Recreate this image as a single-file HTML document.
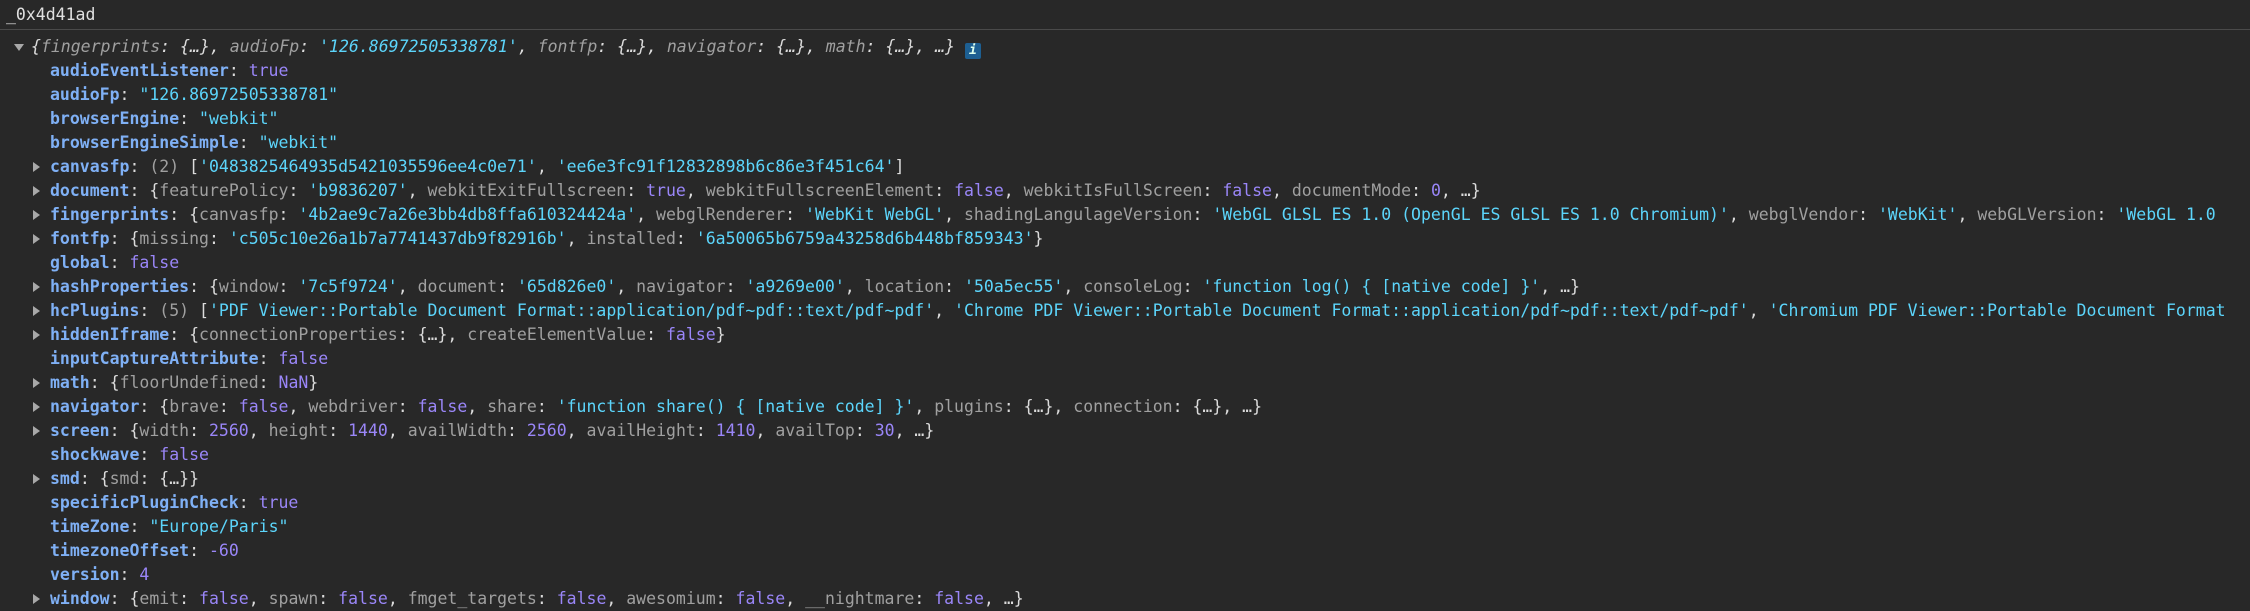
<!DOCTYPE html>
<html><head><meta charset="utf-8"><style>
html,body{margin:0;padding:0;background:#282828;width:2250px;height:610px;overflow:hidden}
body{font-family:"DejaVu Sans Mono","Liberation Mono",monospace;font-size:16.5px;color:#dcdcdc}
.h{position:absolute;left:6px;top:3px;line-height:24px;color:#e0e0e0}
.sep{position:absolute;left:0;top:29px;width:2250px;height:1px;background:#4a4a4a}
.l{position:absolute;left:0;height:24px;line-height:24px;white-space:pre}
.k{color:#7fb0f5;font-weight:bold}
.s{color:#5cd5fb}
.n{color:#9a86f8}
.g{color:#a0a0a0}
.t{display:inline-block;width:0;height:0;border-top:5px solid transparent;border-bottom:5px solid transparent;border-left:7px solid #a8a8a8;position:absolute;left:33px;top:7px}
.d{display:inline-block;width:0;height:0;border-left:5px solid transparent;border-right:5px solid transparent;border-top:7px solid #a8a8a8;position:absolute;left:14px;top:9px}
.i{display:inline-block;width:16px;height:16px;background:#1d5f92;color:#dfe;font-style:italic;font-weight:bold;font-size:13px;line-height:16px;text-align:center;border-radius:2px;vertical-align:-2px}
</style></head><body>
<div class="h">_0x4d41ad</div>
<div class="sep"></div>
<div class="l" style="top:35px;left:0"><span class="d"></span><span style="position:absolute;left:31px;font-style:italic"><span>{</span><span class="g">fingerprints</span>: {…}, <span class="g">audioFp</span>: <span class="s">'126.86972505338781'</span>, <span class="g">fontfp</span>: {…}, <span class="g">navigator</span>: {…}, <span class="g">math</span>: {…}, …} <span class="i">i</span></span></div>

<div style="position:absolute;left:0;top:59px">
<div class="l" style="top:0"><span style="position:absolute;left:50px"><span class="k">audioEventListener</span>: <span class="n">true</span></span></div>
<div class="l" style="top:24px"><span style="position:absolute;left:50px"><span class="k">audioFp</span>: <span class="s">"126.86972505338781"</span></span></div>
<div class="l" style="top:48px"><span style="position:absolute;left:50px"><span class="k">browserEngine</span>: <span class="s">"webkit"</span></span></div>
<div class="l" style="top:72px"><span style="position:absolute;left:50px"><span class="k">browserEngineSimple</span>: <span class="s">"webkit"</span></span></div>
<div class="l" style="top:96px"><span class="t"></span><span style="position:absolute;left:50px"><span class="k">canvasfp</span>: <span class="g">(2)</span> [<span class="s">'0483825464935d5421035596ee4c0e71'</span>, <span class="s">'ee6e3fc91f12832898b6c86e3f451c64'</span>]</span></div>
<div class="l" style="top:120px"><span class="t"></span><span style="position:absolute;left:50px"><span class="k">document</span>: {<span class="g">featurePolicy</span>: <span class="s">'b9836207'</span>, <span class="g">webkitExitFullscreen</span>: <span class="n">true</span>, <span class="g">webkitFullscreenElement</span>: <span class="n">false</span>, <span class="g">webkitIsFullScreen</span>: <span class="n">false</span>, <span class="g">documentMode</span>: <span class="n">0</span>, …}</span></div>
<div class="l" style="top:144px"><span class="t"></span><span style="position:absolute;left:50px"><span class="k">fingerprints</span>: {<span class="g">canvasfp</span>: <span class="s">'4b2ae9c7a26e3bb4db8ffa610324424a'</span>, <span class="g">webglRenderer</span>: <span class="s">'WebKit WebGL'</span>, <span class="g">shadingLangulageVersion</span>: <span class="s">'WebGL GLSL ES 1.0 (OpenGL ES GLSL ES 1.0 Chromium)'</span>, <span class="g">webglVendor</span>: <span class="s">'WebKit'</span>, <span class="g">webGLVersion</span>: <span class="s">'WebGL 1.0</span></span></div>
<div class="l" style="top:168px"><span class="t"></span><span style="position:absolute;left:50px"><span class="k">fontfp</span>: {<span class="g">missing</span>: <span class="s">'c505c10e26a1b7a7741437db9f82916b'</span>, <span class="g">installed</span>: <span class="s">'6a50065b6759a43258d6b448bf859343'</span>}</span></div>
<div class="l" style="top:192px"><span style="position:absolute;left:50px"><span class="k">global</span>: <span class="n">false</span></span></div>
<div class="l" style="top:216px"><span class="t"></span><span style="position:absolute;left:50px"><span class="k">hashProperties</span>: {<span class="g">window</span>: <span class="s">'7c5f9724'</span>, <span class="g">document</span>: <span class="s">'65d826e0'</span>, <span class="g">navigator</span>: <span class="s">'a9269e00'</span>, <span class="g">location</span>: <span class="s">'50a5ec55'</span>, <span class="g">consoleLog</span>: <span class="s">'function log() { [native code] }'</span>, …}</span></div>
<div class="l" style="top:240px"><span class="t"></span><span style="position:absolute;left:50px"><span class="k">hcPlugins</span>: <span class="g">(5)</span> [<span class="s">'PDF Viewer::Portable Document Format::application/pdf~pdf::text/pdf~pdf'</span>, <span class="s">'Chrome PDF Viewer::Portable Document Format::application/pdf~pdf::text/pdf~pdf'</span>, <span class="s">'Chromium PDF Viewer::Portable Document Format</span></span></div>
<div class="l" style="top:264px"><span class="t"></span><span style="position:absolute;left:50px"><span class="k">hiddenIframe</span>: {<span class="g">connectionProperties</span>: {…}, <span class="g">createElementValue</span>: <span class="n">false</span>}</span></div>
<div class="l" style="top:288px"><span style="position:absolute;left:50px"><span class="k">inputCaptureAttribute</span>: <span class="n">false</span></span></div>
<div class="l" style="top:312px"><span class="t"></span><span style="position:absolute;left:50px"><span class="k">math</span>: {<span class="g">floorUndefined</span>: <span class="n">NaN</span>}</span></div>
<div class="l" style="top:336px"><span class="t"></span><span style="position:absolute;left:50px"><span class="k">navigator</span>: {<span class="g">brave</span>: <span class="n">false</span>, <span class="g">webdriver</span>: <span class="n">false</span>, <span class="g">share</span>: <span class="s">'function share() { [native code] }'</span>, <span class="g">plugins</span>: {…}, <span class="g">connection</span>: {…}, …}</span></div>
<div class="l" style="top:360px"><span class="t"></span><span style="position:absolute;left:50px"><span class="k">screen</span>: {<span class="g">width</span>: <span class="n">2560</span>, <span class="g">height</span>: <span class="n">1440</span>, <span class="g">availWidth</span>: <span class="n">2560</span>, <span class="g">availHeight</span>: <span class="n">1410</span>, <span class="g">availTop</span>: <span class="n">30</span>, …}</span></div>
<div class="l" style="top:384px"><span style="position:absolute;left:50px"><span class="k">shockwave</span>: <span class="n">false</span></span></div>
<div class="l" style="top:408px"><span class="t"></span><span style="position:absolute;left:50px"><span class="k">smd</span>: {<span class="g">smd</span>: {…}}</span></div>
<div class="l" style="top:432px"><span style="position:absolute;left:50px"><span class="k">specificPluginCheck</span>: <span class="n">true</span></span></div>
<div class="l" style="top:456px"><span style="position:absolute;left:50px"><span class="k">timeZone</span>: <span class="s">"Europe/Paris"</span></span></div>
<div class="l" style="top:480px"><span style="position:absolute;left:50px"><span class="k">timezoneOffset</span>: <span class="n">-60</span></span></div>
<div class="l" style="top:504px"><span style="position:absolute;left:50px"><span class="k">version</span>: <span class="n">4</span></span></div>
<div class="l" style="top:528px"><span class="t"></span><span style="position:absolute;left:50px"><span class="k">window</span>: {<span class="g">emit</span>: <span class="n">false</span>, <span class="g">spawn</span>: <span class="n">false</span>, <span class="g">fmget_targets</span>: <span class="n">false</span>, <span class="g">awesomium</span>: <span class="n">false</span>, <span class="g">__nightmare</span>: <span class="n">false</span>, …}</span></div>
</div>
</body></html>
